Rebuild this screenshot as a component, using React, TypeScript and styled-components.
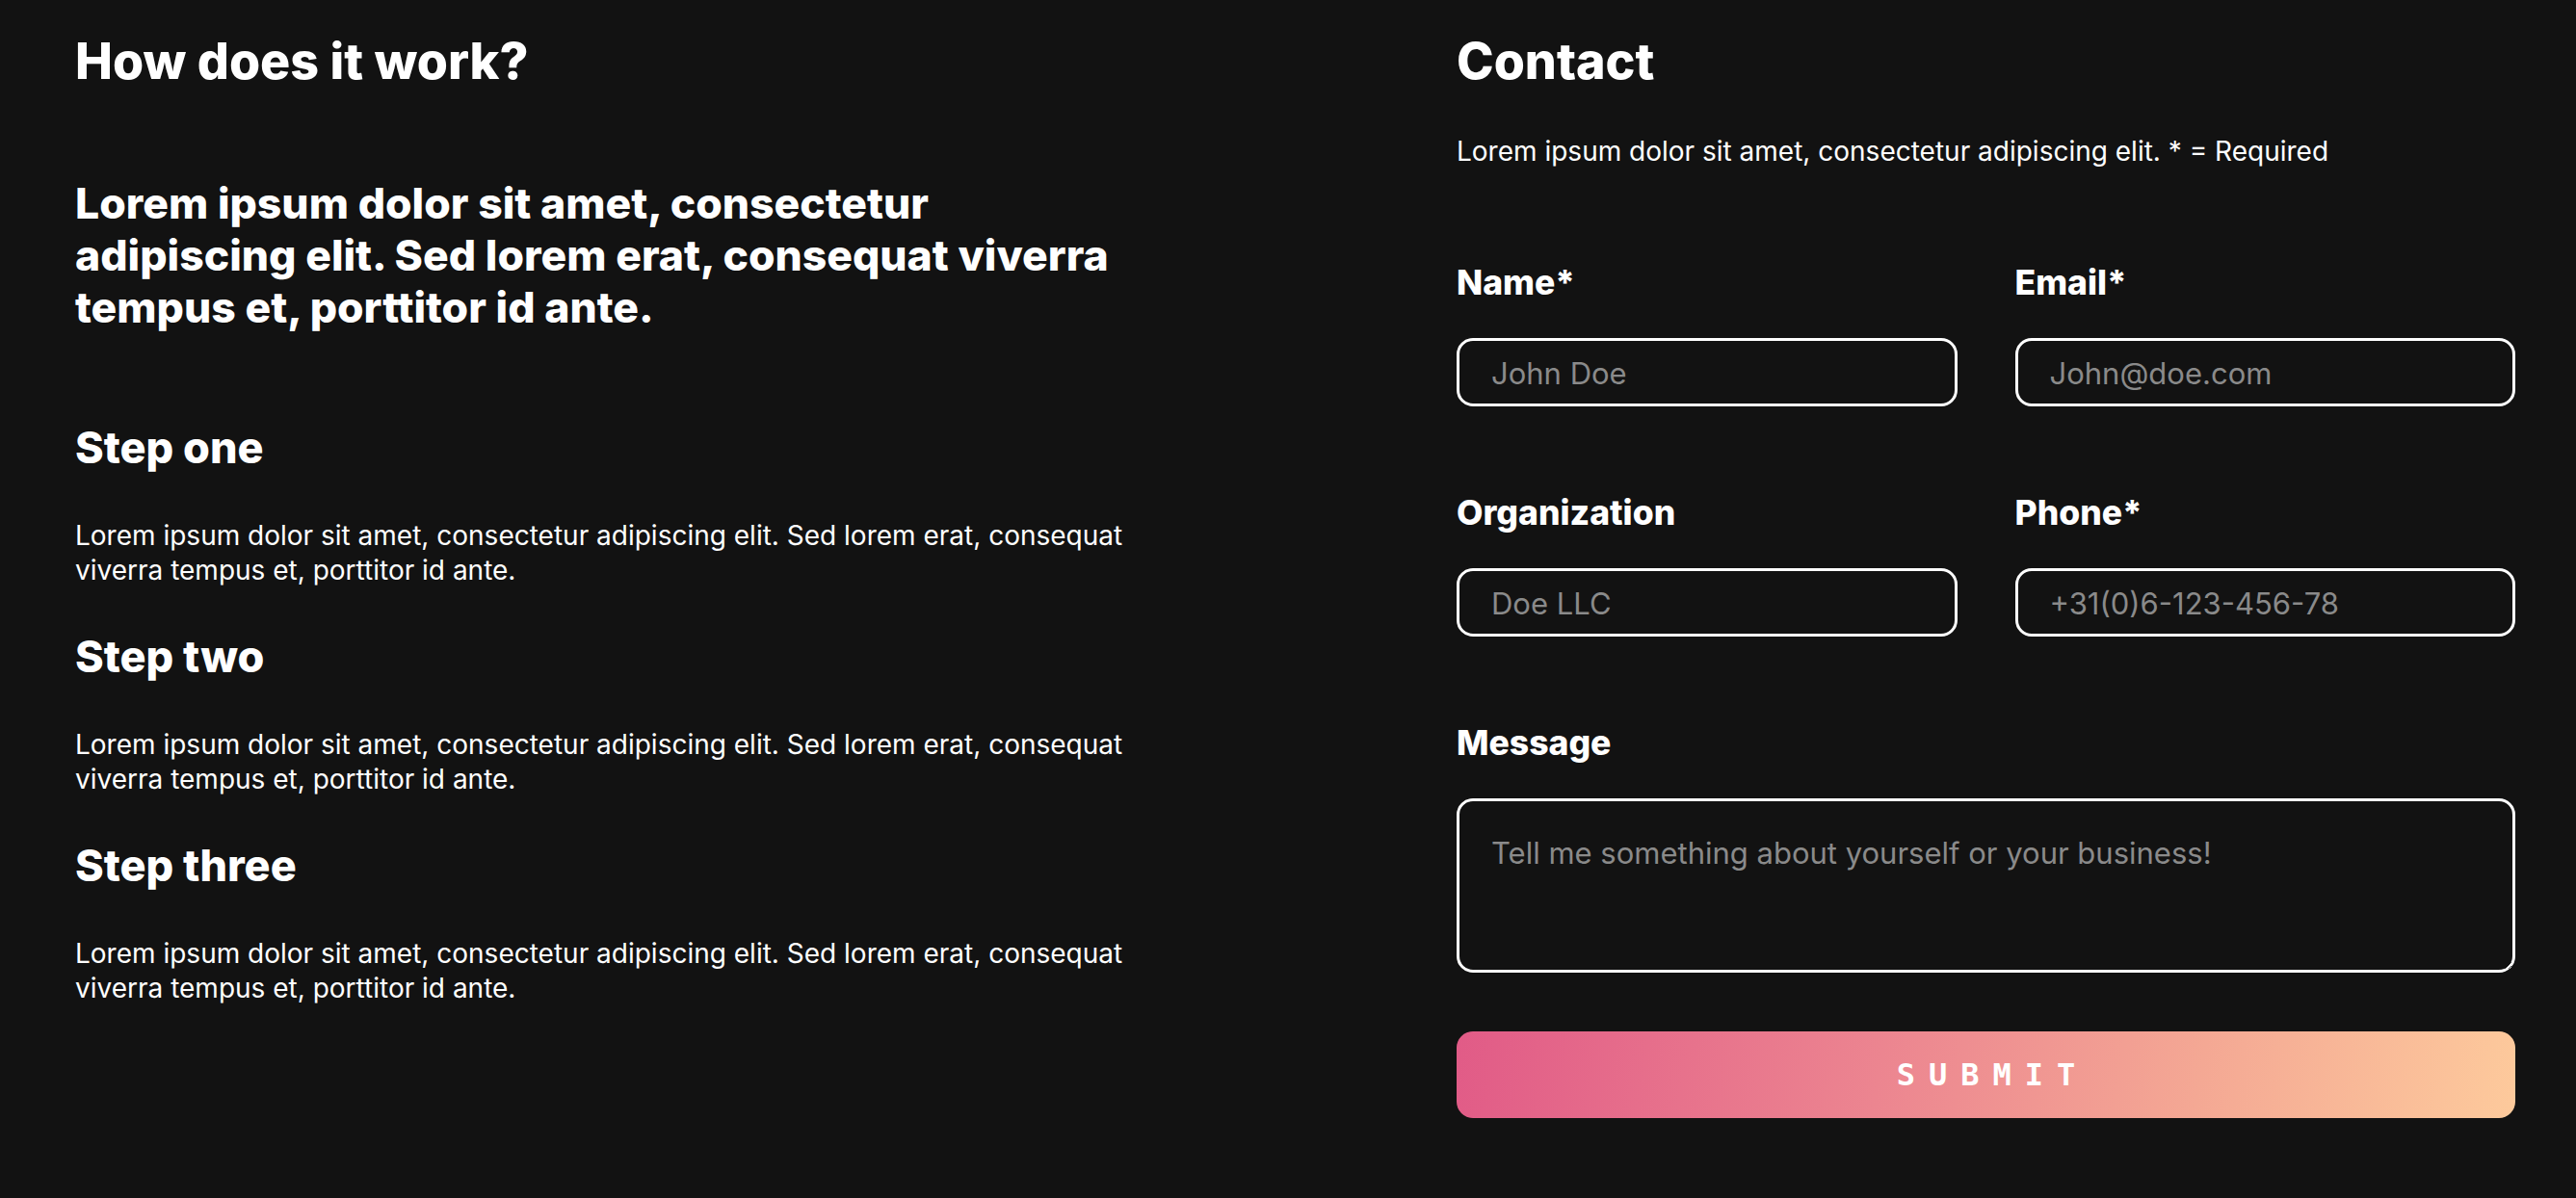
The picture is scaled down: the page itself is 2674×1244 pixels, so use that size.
import React from "react";
import styled, { createGlobalStyle } from "styled-components";

const GlobalStyle = createGlobalStyle`
  html, body {
    margin: 0;
    padding: 0;
    background: #121212;
  }
  body {
    font-family: Inter, "Liberation Sans", sans-serif;
    color: #ffffff;
  }
  * { box-sizing: border-box; }
`;

const Page = styled.main`
  display: grid;
  grid-template-columns: 1fr 1fr;
  column-gap: 335px;
  padding: 34px 63px 60px 78px;
  min-height: 1244px;
  background: #121212;
`;

const Column = styled.section`
  display: flex;
  flex-direction: column;
`;

const SectionTitle = styled.h2`
  margin: 0;
  font-size: 52px;
  line-height: 60px;
  font-weight: 800;
`;

const Lead = styled.p`
  margin: 90px 0 0;
  font-size: 44.5px;
  line-height: 54px;
  font-weight: 800;
`;

const Steps = styled.div`
  display: flex;
  flex-direction: column;
  gap: 45px;
  margin-top: 92px;
`;

const Step = styled.article`
  display: flex;
  flex-direction: column;
  gap: 47px;
`;

const StepTitle = styled.h3`
  margin: 0;
  font-size: 45px;
  line-height: 53px;
  font-weight: 800;
`;

const Body = styled.p<{ $top?: number }>`
  margin: ${(p) => p.$top ?? 0}px 0 0;
  font-size: 28px;
  line-height: 36px;
  font-weight: 400;
`;

const Form = styled.form`
  display: flex;
  flex-direction: column;
  margin-top: 98px;
`;

const Row = styled.div`
  display: grid;
  grid-template-columns: 1fr 1fr;
  column-gap: 60px;
  margin-bottom: 90px;
`;

const Field = styled.label`
  display: flex;
  flex-direction: column;
  gap: 37px;
`;

const LabelText = styled.span`
  font-size: 35.5px;
  line-height: 41px;
  font-weight: 800;
`;

const fieldBase = `
  width: 100%;
  background: #121212;
  border: 3px solid #ffffff;
  border-radius: 17px;
  color: #ffffff;
  font-family: Inter, "Liberation Sans", sans-serif;
  font-size: 31px;
  line-height: 36px;
  outline: none;
  &::placeholder { color: #8a8a8a; opacity: 1; }
`;

const Input = styled.input`
  ${fieldBase}
  height: 71px;
  padding: 2px 33px 0;
`;

const TextArea = styled.textarea`
  ${fieldBase}
  height: 181px;
  padding: 36px 33px;
  resize: vertical;
  display: block;
`;

const MessageField = styled(Field)`
  margin-bottom: 61px;
`;

const Submit = styled.button`
  height: 90px;
  width: 100%;
  border: none;
  border-radius: 17px;
  background: linear-gradient(100deg, #e15b87 0%, #ec8590 40%, #f4a894 70%, #fdca9c 100%);
  color: #ffffff;
  font-family: "DejaVu Sans Mono", monospace;
  font-weight: 700;
  font-size: 32px;
  letter-spacing: 14px;
  text-indent: 14px;
  cursor: pointer;
`;

const steps = [
  { title: "Step one" },
  { title: "Step two" },
  { title: "Step three" },
];

const lorem =
  "Lorem ipsum dolor sit amet, consectetur adipiscing elit. Sed lorem erat, consequat viverra tempus et, porttitor id ante.";

export default function App() {
  return (
    <>
      <GlobalStyle />
      <Page>
        <Column>
          <SectionTitle>How does it work?</SectionTitle>
          <Lead>{lorem}</Lead>
          <Steps>
            {steps.map((s) => (
              <Step key={s.title}>
                <StepTitle>{s.title}</StepTitle>
                <Body>{lorem}</Body>
              </Step>
            ))}
          </Steps>
        </Column>
        <Column>
          <SectionTitle>Contact</SectionTitle>
          <Body $top={45}>Lorem ipsum dolor sit amet, consectetur adipiscing elit. * = Required</Body>
          <Form onSubmit={(e) => e.preventDefault()}>
            <Row>
              <Field>
                <LabelText>Name*</LabelText>
                <Input type="text" placeholder="John Doe" />
              </Field>
              <Field>
                <LabelText>Email*</LabelText>
                <Input type="email" placeholder="John@doe.com" />
              </Field>
            </Row>
            <Row>
              <Field>
                <LabelText>Organization</LabelText>
                <Input type="text" placeholder="Doe LLC" />
              </Field>
              <Field>
                <LabelText>Phone*</LabelText>
                <Input type="tel" placeholder="+31(0)6-123-456-78" />
              </Field>
            </Row>
            <MessageField>
              <LabelText>Message</LabelText>
              <TextArea placeholder="Tell me something about yourself or your business!" />
            </MessageField>
            <Submit type="submit">SUBMIT</Submit>
          </Form>
        </Column>
      </Page>
    </>
  );
}
